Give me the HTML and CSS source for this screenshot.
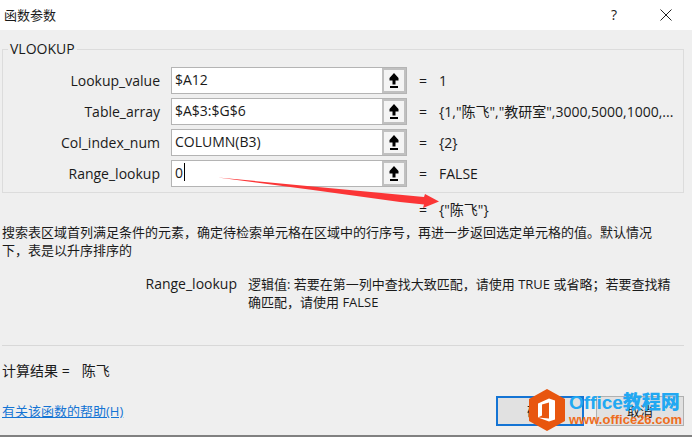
FILE: index.html
```
<!DOCTYPE html>
<html lang="zh-CN">
<head>
    <meta charset="UTF-8">
    <meta name="viewport" content="width=device-width, initial-scale=1.0">
    <title>函数参数</title>
    <link rel="stylesheet" href="styles.css">
</head>
<body>
    <!-- Judul dialog -->
    <header class="titlebar">
        <h1>函数参数</h1>
        <button type="button" class="title-btn" aria-label="帮助">?</button>
        <button type="button" class="title-btn" aria-label="关闭">
            <svg width="12" height="12" viewBox="0 0 12 12"><path d="M.5 .5L11.5 11.5M11.5 .5L.5 11.5" stroke="#222" fill="none"/></svg>
        </button>
    </header>

    <main>
        <svg class="hidden" aria-hidden="true">
            <symbol id="pick" viewBox="0 0 10 16">
                <path d="M5 0L9.500 5V7.500H6.500V11.500H3.500V7.500H.5V5Z"/>
                <rect x="1" y="13" width="8" height="2"/>
            </symbol>
        </svg>

        <form id="argForm">
            <fieldset>
                <legend>VLOOKUP</legend>
                <div class="row">
                    <label for="lookupValue">Lookup_value</label>
                    <div class="field">
                        <input type="text" id="lookupValue" value="$A12">
                        <button type="button" class="pick-btn" aria-label="选择区域"><svg><use href="#pick"/></svg></button>
                    </div>
                    <span class="eq">=</span>
                    <output for="lookupValue">1</output>
                </div>
                <div class="row">
                    <label for="tableArray">Table_array</label>
                    <div class="field">
                        <input type="text" id="tableArray" value="$A$3:$G$6">
                        <button type="button" class="pick-btn" aria-label="选择区域"><svg><use href="#pick"/></svg></button>
                    </div>
                    <span class="eq">=</span>
                    <output for="tableArray">{1,"陈飞","教研室",3000,5000,1000,...</output>
                </div>
                <div class="row">
                    <label for="colIndex">Col_index_num</label>
                    <div class="field">
                        <input type="text" id="colIndex" value="COLUMN(B3)">
                        <button type="button" class="pick-btn" aria-label="选择区域"><svg><use href="#pick"/></svg></button>
                    </div>
                    <span class="eq">=</span>
                    <output for="colIndex">{2}</output>
                </div>
                <div class="row">
                    <label for="rangeLookup">Range_lookup</label>
                    <div class="field">
                        <input type="text" id="rangeLookup" value="0">
                        <span class="caret"></span>
                        <button type="button" class="pick-btn" aria-label="选择区域"><svg><use href="#pick"/></svg></button>
                        <!-- Panah merah -->
                        <svg class="arrow" width="224" height="34" viewBox="0 0 224 34">
                            <path d="M0 .5L206 20L207 17L221 24.500L205 31L206 27.500L182 25L95 13Z" fill="#fb3536"/>
                        </svg>
                    </div>
                    <span class="eq">=</span>
                    <output for="rangeLookup">FALSE</output>
                </div>
            </fieldset>

            <div class="row result">
                <span class="eq">=</span>
                <output>{"陈飞"}</output>
            </div>

            <p class="description">搜索表区域首列满足条件的元素，确定待检索单元格在区域中的行序号，再进一步返回选定单元格的值。默认情况下，表是以升序排序的</p>

            <dl class="arg-help">
                <dt>Range_lookup</dt>
                <dd>逻辑值: 若要在第一列中查找大致匹配，请使用 TRUE 或省略；若要查找精确匹配，请使用 FALSE</dd>
            </dl>

            <p class="total"><span>计算结果 =</span><output>陈飞</output></p>

            <footer>
                <a href="#">有关该函数的帮助(H)</a>
                <div class="buttons">
                    <button type="button" class="btn btn-ok">确定</button>
                    <button type="button" class="btn">取消</button>
                    <!-- Logo situs -->
                    <div class="watermark">
                        <svg width="36" height="42" viewBox="0 0 36 42">
                            <path d="M18 0L36 10V32L18 42L0 32V10Z" fill="#e8560f"/>
                            <path d="M9 14.500L20 9.500L26 11.500V30.500L20 32.500L9 28.500L20 29.500V13.500L13 15.500V26.500L9 28.500Z" fill="#fff"/>
                        </svg>
                        <div class="mark-text">
                            <strong>Office教程网</strong>
                            <span>www.office26.com</span>
                        </div>
                    </div>
                </div>
            </footer>
        </form>
    </main>
</body>
</html>
```
FILE: styles.css
```
* {
    box-sizing: border-box;
}
body {
    font-family: "Open Sans", "Noto Sans CJK SC", sans-serif;
    font-size: 14px;
    line-height: 18px;
    color: #1a1a1a;
    background-color: #efefef;
    margin: 0;
    min-height: 100vh;
    border-bottom: 2px solid #808080;
}
input, button {
    font: inherit;
    color: inherit;
    margin: 0;
}
.titlebar {
    display: flex;
    align-items: center;
    height: 30px;
    padding-left: 4px;
    background-color: white;
}
h1 {
    flex: 1;
    margin: 0;
    font-size: 13px;
    font-weight: normal;
}
.title-btn {
    width: 52px;
    height: 28px;
    padding: 0;
    border: none;
    background: none;
}
.title-btn svg {
    display: block;
    margin: 0 auto;
}
.hidden {
    display: none;
}
main {
    padding: 10px 8px 0 2px;
}
fieldset {
    min-width: 0;
    margin: 0;
    padding: 9px 0 5px;
    border: 1px solid #dcdcdc;
}
legend {
    margin-left: 5px;
    padding: 0 2px;
}
.row {
    display: flex;
    align-items: center;
    height: 27px;
}
.row + .row {
    margin-top: 4px;
}
label {
    width: 157px;
    text-align: right;
}
.field {
    position: relative;
    display: flex;
    width: 236px;
    height: 27px;
    margin-left: 11px;
    border: 1px solid #b4b4b4;
    background-color: white;
}
.field input {
    flex: 1;
    min-width: 0;
    padding: 0 3px 2px;
    border: none;
    outline: none;
    background: none;
}
.pick-btn {
    width: 24px;
    padding: 0;
    border: 2px solid #c0c0c0;
    background-color: #f4f4f4;
}
.pick-btn svg {
    display: block;
    width: 10px;
    height: 16px;
    margin: 0 auto;
}
.caret {
    position: absolute;
    left: 12px;
    top: 2px;
    width: 1px;
    height: 18px;
    background-color: black;
}
.arrow {
    position: absolute;
    left: 46px;
    top: 16px;
    z-index: 1;
}
.eq {
    width: 20px;
    margin-left: 12px;
}
.row output {
    flex: 1;
    min-width: 0;
    white-space: nowrap;
}
.result {
    margin-top: 3px;
    padding-left: 405px;
}
p {
    margin: 0;
}
.description {
    padding-right: 20px;
    font-size: 13px;
}
.arg-help {
    display: flex;
    margin: 16px 0 0;
    padding-bottom: 34px;
    border-bottom: 1px solid #d8d8d8;
}
.arg-help dt {
    width: 235px;
    text-align: right;
}
.arg-help dd {
    flex: 1;
    margin-left: 11px;
    padding-right: 12px;
    font-size: 13px;
}
.total {
    display: flex;
    gap: 12px;
    margin-top: 16px;
}
footer {
    display: flex;
    justify-content: space-between;
    align-items: center;
    margin-top: 16px;
}
a {
    color: #1474d4;
    font-size: 13px;
}
.buttons {
    position: relative;
    display: flex;
    gap: 12px;
}
.btn {
    width: 88px;
    height: 30px;
    padding: 0;
    border: 1px solid #b0b0b0;
    background-color: #e1e1e1;
    font-size: 13px;
}
.btn-ok {
    border: 2px solid #1474d4;
}
.watermark {
    position: absolute;
    left: 33px;
    top: -7px;
    display: flex;
    gap: 4px;
}
.mark-text {
    font-family: "Liberation Sans", "Noto Sans CJK SC", sans-serif;
    font-weight: bold;
    white-space: nowrap;
    padding-top: 5px;
}
.mark-text strong {
    display: block;
    font-size: 19px;
    line-height: 18px;
    color: #22a8f2;
}
.mark-text span {
    display: block;
    font-size: 13px;
    line-height: 15px;
    color: #ee6d1c;
}
```
